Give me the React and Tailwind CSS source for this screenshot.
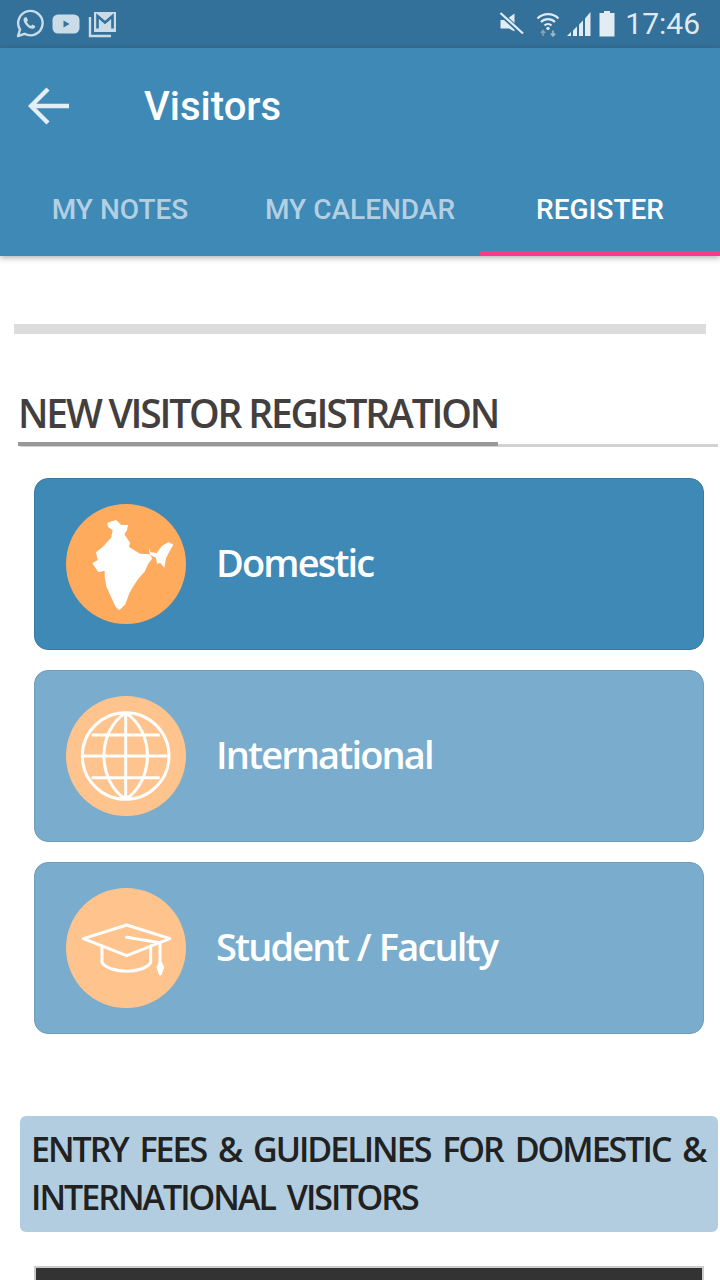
import React from "react";

const Whatsapp = () => (
  <svg width="30" height="30" viewBox="0 0 30 30" fill="none">
    <path d="M4 27 L6 20.5 A12.2 12.2 0 1 1 10.5 24.8 Z" stroke="#c9dce8" strokeWidth="2.4" strokeLinejoin="round" />
    <path d="M10.5 8.5 C9 10 9.2 12.5 11.5 15.5 C14 18.8 17 20.3 19.3 19.7 C20.8 19.2 21.3 18 21.2 17 L18.3 15.5 L16.9 17 C15 16.2 13.6 14.7 12.8 12.8 L14 11.4 L12.7 8.3 Z" fill="#c9dce8" />
  </svg>
);

const Youtube = () => (
  <svg width="28" height="20" viewBox="0 0 28 20">
    <rect x="0.5" y="0.5" width="27" height="19" rx="5.5" fill="#c9dce8" />
    <path d="M11.5 6.5 L17.5 10 L11.5 13.5 Z" fill="#3a7399" />
  </svg>
);

const Gmail = () => (
  <svg width="30" height="28" viewBox="0 0 30 28" fill="none">
    <path d="M2 7 V26 H23" stroke="#c9dce8" strokeWidth="2.4" />
    <rect x="6" y="2" width="22" height="20" fill="#c9dce8" />
    <path d="M9.5 18.5 V6 L17 12.5 L24.5 6 V18.5" stroke="#33709a" strokeWidth="2.6" />
  </svg>
);

const Mute = () => (
  <svg width="26" height="26" viewBox="0 0 26 26">
    <path d="M1.5 9 H6.5 L15.5 2.5 V20.5 L10 17.5 H1.5 Z" fill="#e3ecf2" />
    <path d="M1 2 L24 23" stroke="#33709a" strokeWidth="5" />
    <path d="M1.5 2 L24 22.5" stroke="#e3ecf2" strokeWidth="2.2" />
  </svg>
);

const Wifi = () => (
  <svg width="24" height="26" viewBox="0 0 24 26" fill="none">
    <path d="M1.5 7.5 A15 15 0 0 1 22.5 7.5" stroke="#dfe9f0" strokeWidth="2.2" />
    <path d="M5 11 A10 10 0 0 1 19 11" stroke="#dfe9f0" strokeWidth="2.2" />
    <path d="M8.5 14.5 A5 5 0 0 1 15.5 14.5" stroke="#dfe9f0" strokeWidth="2.2" />
    <circle cx="12" cy="17.4" r="1.7" fill="#dfe9f0" />
    <path d="M7 25 V20 M4.8 22 L7 19.5 L9.2 22" stroke="#7ea5c0" strokeWidth="1.6" />
    <path d="M17 19.5 V24.5 M14.8 22.5 L17 25 L19.2 22.5" stroke="#9dbbd0" strokeWidth="1.6" />
  </svg>
);

const Signal = () => (
  <svg width="26" height="26" viewBox="0 0 26 26">
    <path d="M1 25 L5 21 V25 Z" fill="#e3ecf2" />
    <path d="M7 19.5 L11 15.5 V25 H7 Z" fill="#e3ecf2" />
    <path d="M13 13.5 L17 9.5 V25 H13 Z" fill="#e3ecf2" />
    <path d="M19 7.5 L24.5 1 V25 H19 Z" fill="#e3ecf2" />
  </svg>
);

const Battery = () => (
  <svg width="16" height="26" viewBox="0 0 16 26">
    <path d="M5 0 H11 V2 H15.5 V25.5 H0.5 V2 H5 Z" fill="#e3ecf2" />
  </svg>
);

const India = () => (
  <svg width="120" height="120" viewBox="108 87 360 360" className="shrink-0">
    <path fill="#fff" d="M232,143 L258,135 L274,150 L294,150 L291,166 L283,178 L300,203 L297,216 L330,236 L358,238 L367,250 L354,268 L344,290 L326,310 L309,335 L298,355 L286,388 L268,406 L257,396 L243,365 L229,335 L224,305 L224,287 L205,292 L187,265 L203,255 L198,232 L218,216 L243,188 L248,166 L234,156 Z" />
    <path fill="#fff" d="M357,218 L362,232 L380,234 L395,214 L415,201 L430,209 L417,232 L408,250 L403,278 L391,264 L381,266 L378,248 L360,240 Z" />
  </svg>
);

const Globe = () => (
  <svg width="120" height="120" viewBox="108 78 360 360" fill="none" stroke="#fff" strokeWidth="9" className="shrink-0">
    <circle cx="287" cy="258" r="130" />
    <path d="M287 128 V388 M157 258 H417" />
    <path d="M287 128 C200 185 200 330 287 388 M287 128 C374 185 374 330 287 388" />
    <path d="M185 195 H389 M185 323 H389" />
  </svg>
);

const Cap = () => (
  <svg width="120" height="120" viewBox="108 84 360 360" fill="none" stroke="#fff" strokeWidth="9" strokeLinejoin="round" strokeLinecap="round" className="shrink-0">
    <path d="M160 236 L290 195 L420 236 L290 287 Z" />
    <path d="M216 258 V308 C240 342 340 342 362 308 V258" />
    <path d="M290 232 L390 248 V310" />
    <path d="M391 308 L398 322 L391 342 L384 322 Z" fill="#fff" />
  </svg>
);

const Option = ({ icon, label, active }) => (
  <div className={active ? "flex h-[172px] items-center gap-[30px] rounded-[14px] border border-[#3a7ba3] bg-[#3f89b6] pl-[31px]" : "flex h-[172px] items-center gap-[30px] rounded-[14px] border border-[#6f9dbb] bg-[#7aaccd] pl-[31px]"}>
    <div className={active ? "h-[120px] w-[120px] shrink-0 rounded-full bg-[#ffab5e]" : "h-[120px] w-[120px] shrink-0 rounded-full bg-[#ffc38e]"}>{icon}</div>
    <span className="pb-[4px] text-[38px] font-semibold leading-none tracking-[-1.85px] [word-spacing:1px] text-white">{label}</span>
  </div>
);

export default function App() {
  return (
    <div className="h-[1280px] w-[720px] overflow-hidden bg-white font-['Open_Sans',sans-serif]">
      <div className="flex h-[48px] items-center justify-between bg-[#33709a] pl-[14px] pr-[20px]">
        <div className="flex items-center">
          <Whatsapp />
          <div className="ml-[8px]"><Youtube /></div>
          <div className="ml-[8px]"><Gmail /></div>
        </div>
        <div className="flex items-center">
          <Mute />
          <div className="ml-[11px]"><Wifi /></div>
          <div className="ml-[6px]"><Signal /></div>
          <div className="ml-[7px]"><Battery /></div>
          <span className="ml-[10px] font-['Roboto',sans-serif] text-[30px] leading-none text-[#dfe9f0]">17:46</span>
        </div>
      </div>

      <header className="relative z-10 h-[208px] bg-[#3f89b6] shadow-[0_2px_6px_rgba(0,0,0,0.3)]">
        <div className="flex h-[116px] items-center pl-[28px]">
          <svg width="42" height="38" viewBox="0 0 42 38" fill="none" stroke="#e4eff5" strokeWidth="4.4">
            <path d="M41 19 H4 M20 2 L3 19 L20 36" />
          </svg>
          <h1 className="ml-[74px] pt-[2px] font-['Roboto',sans-serif] text-[40px] font-medium leading-none text-white">Visitors</h1>
        </div>
        <nav className="grid h-[92px] grid-cols-3 font-['Roboto',sans-serif] text-[28px] font-medium">
          <div className="flex items-center justify-center text-[#b2d0e2]">MY NOTES</div>
          <div className="flex items-center justify-center text-[#b2d0e2]">MY CALENDAR</div>
          <div className="flex items-center justify-center border-b-[5px] border-[#f63d7d] pt-[5px] text-white">REGISTER</div>
        </nav>
      </header>

      <main>
        <div className="mx-[14px] mt-[68px] h-[10px] bg-[#dcdcdc]" />

        <div className="ml-[20px] mr-[2px] mt-[57px] border-b-[3px] border-[#d2d2d2]">
          <h2 className="-mb-[2px] -ml-[2px] w-fit border-b-[4px] border-[#999999] pb-[7px] text-[39px] font-semibold leading-[44px] tracking-[-2.2px] text-[#433f3f]">NEW VISITOR REGISTRATION</h2>
        </div>

        <div className="mx-[34px] mt-[31px] flex w-[670px] flex-col gap-[20px]">
          <Option active icon={<India />} label="Domestic" />
          <Option icon={<Globe />} label="International" />
          <Option icon={<Cap />} label="Student / Faculty" />
        </div>

        <div className="ml-[20px] mr-[2px] mt-[82px] h-[116px] whitespace-nowrap rounded-[6px] bg-[#b2cde0] pl-[11px] pt-[9px] text-[34px] font-semibold leading-[48px] tracking-[-2px] [word-spacing:5px] text-[#212121]">
          ENTRY FEES &amp; GUIDELINES FOR DOMESTIC &amp;<br />INTERNATIONAL VISITORS
        </div>

        <div className="mx-[34px] mt-[34px] h-[60px] w-[670px] border-2 border-[#cccccc] bg-[#333333]" />
      </main>
    </div>
  );
}
